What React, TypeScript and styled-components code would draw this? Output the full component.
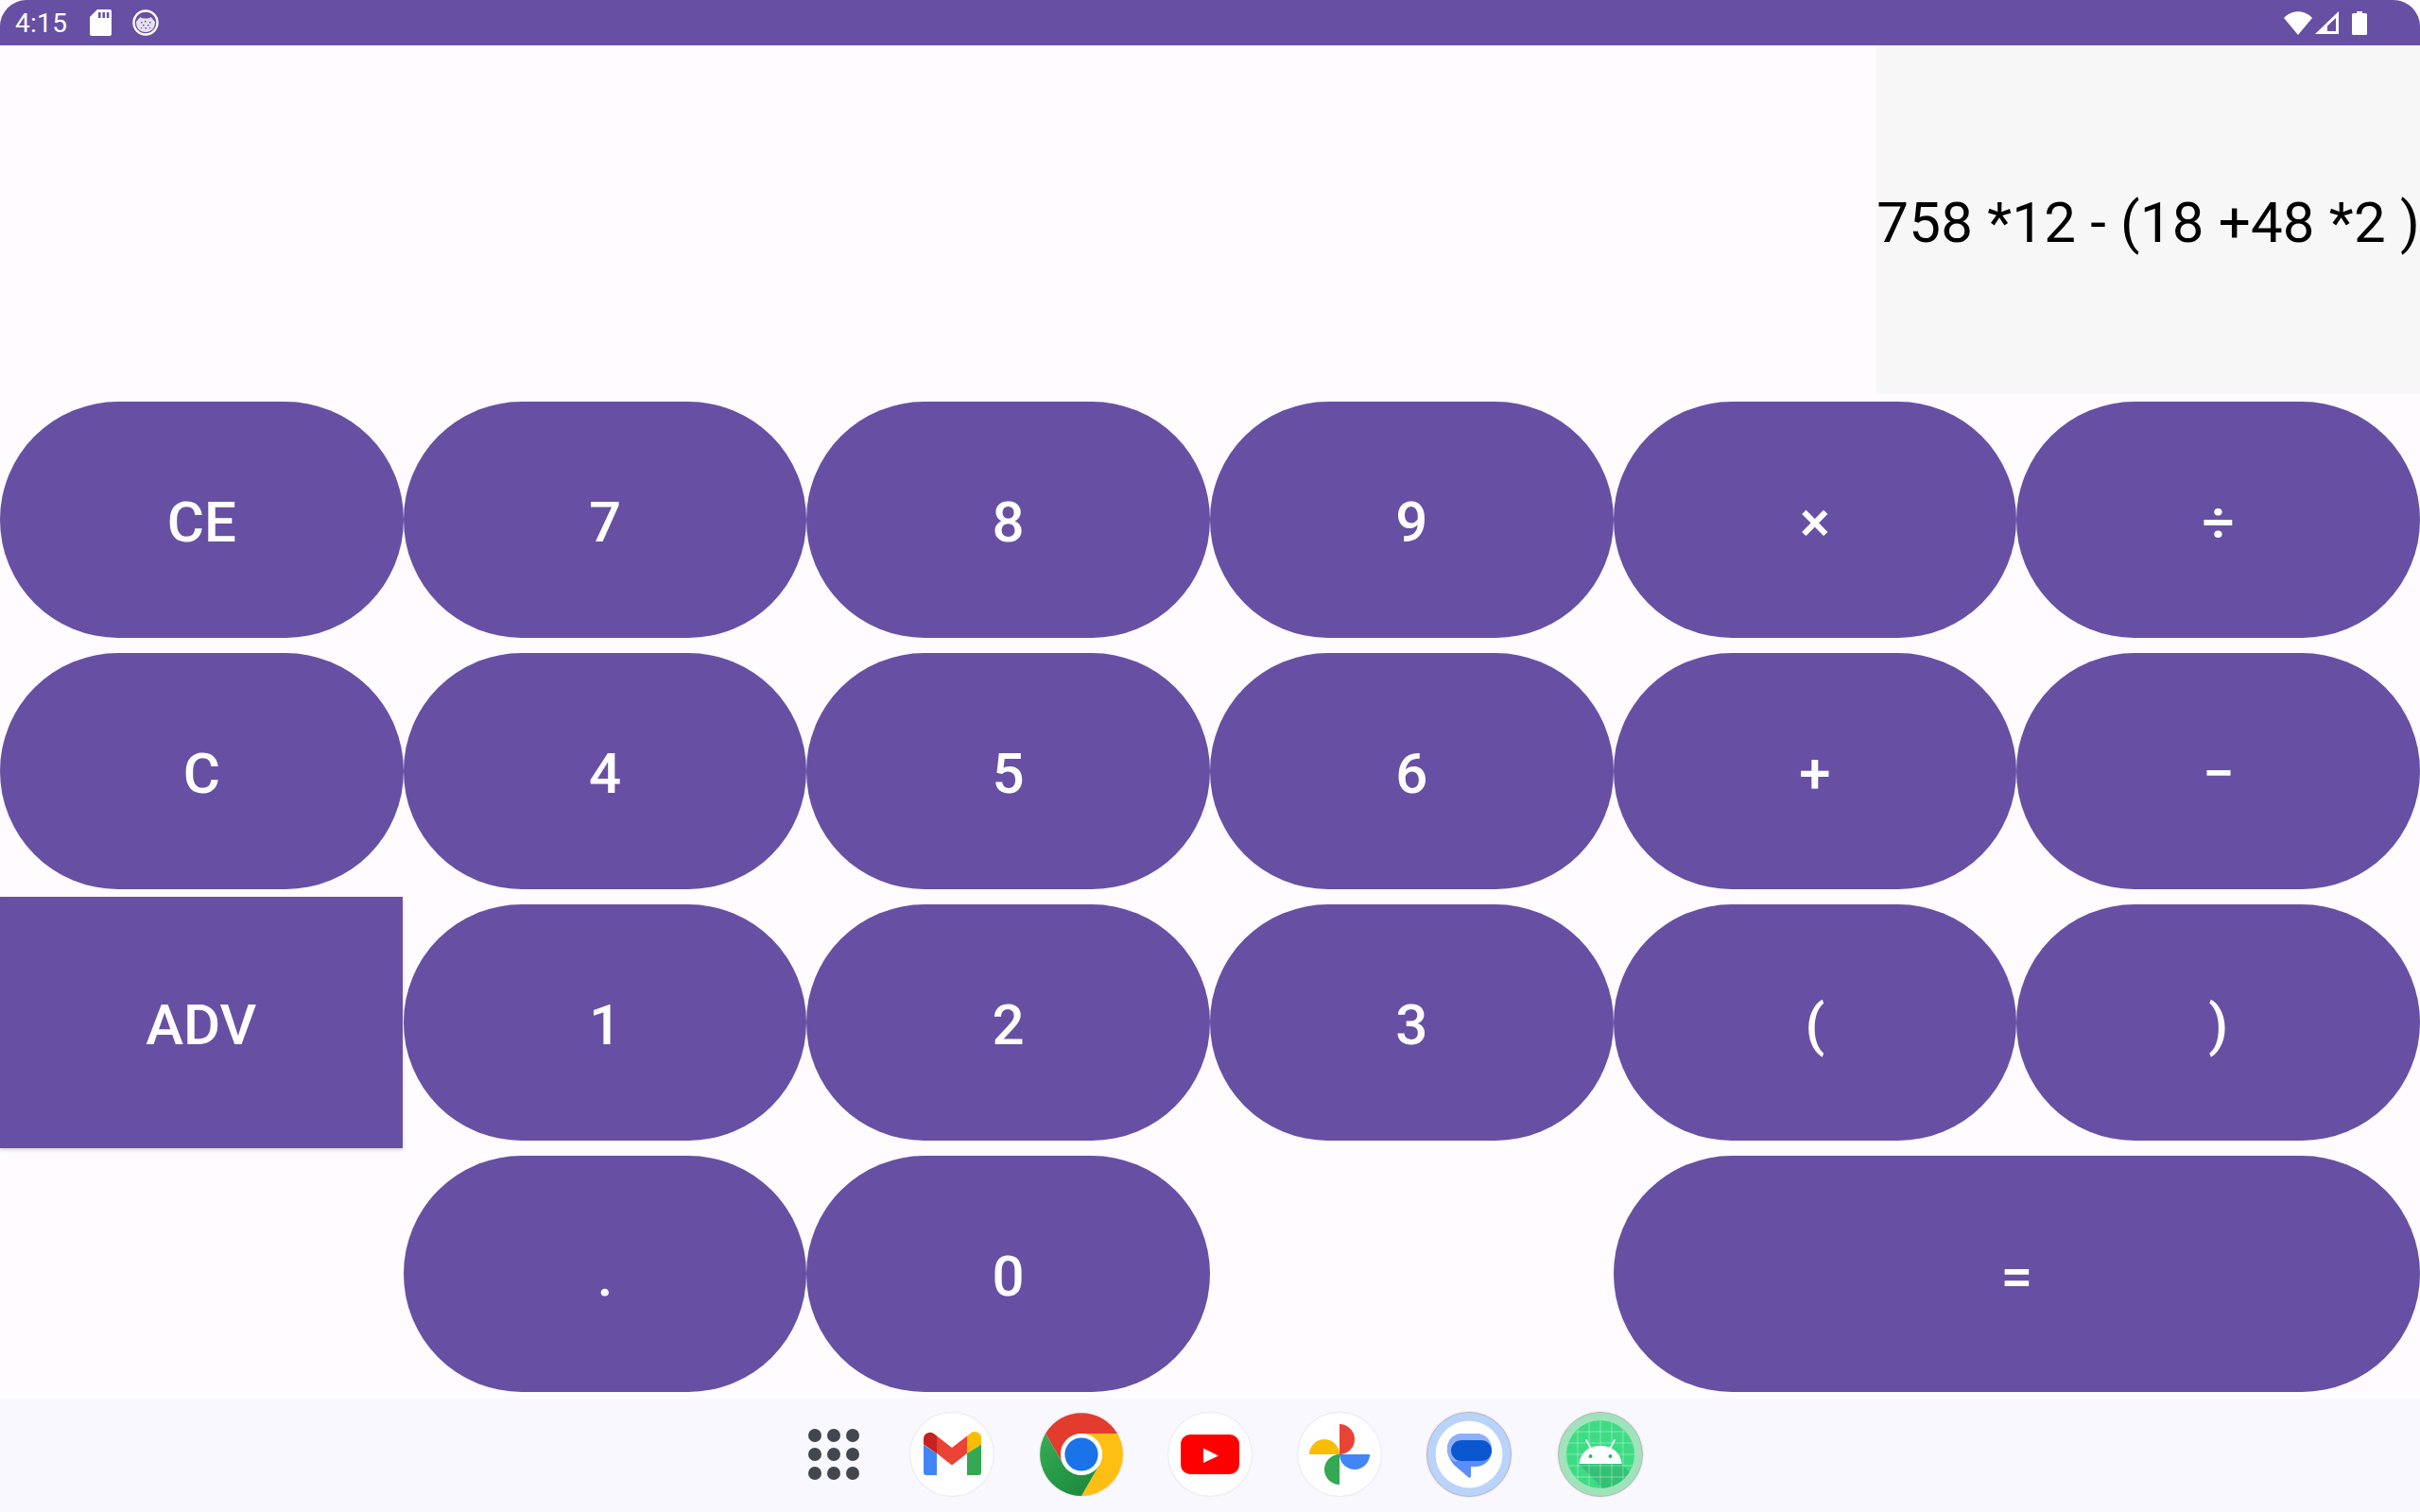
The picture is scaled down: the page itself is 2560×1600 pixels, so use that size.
import React from "react"
import styled, { createGlobalStyle } from "styled-components"

const Global = createGlobalStyle`
html, body {
    margin: 0;
    padding: 0;
    background: #ffffff;
}
* { box-sizing: border-box; }
`

const Screen = styled.div`
width: 2560px;
height: 1600px;
display: flex;
flex-direction: column;
background: #fffbfe;
font-family: Roboto, "Liberation Sans", sans-serif;
overflow: hidden;
`

const StatusBar = styled.div`
height: 48px;
flex: none;
display: flex;
align-items: center;
padding: 0 56px 0 16px;
background: #6750a3;
border-radius: 28px 28px 0 0;
color: #ffffff;
`

const Clock = styled.span`
font-size: 28px;
letter-spacing: 0.3px;
width: 79px;
`

const StatusLeft = styled.div`
display: flex;
align-items: center;
gap: 22px;
flex: 1;
`

const StatusRight = styled.div`
display: flex;
align-items: center;
gap: 3px;
`

const Display = styled.div`
height: 369px;
flex: none;
display: flex;
justify-content: flex-end;
`

const DisplayPanel = styled.div`
display: flex;
align-items: center;
background: #f6f7f6;
font-size: 60px;
letter-spacing: 0.2px;
color: #000000;
white-space: nowrap;
padding-top: 6px;
`

const Keypad = styled.div`
flex: none;
height: 1063px;
display: grid;
grid-template-columns: repeat(6, 1fr);
grid-template-rows: repeat(4, 266px);
`

const Key = styled.button<{ $square?: boolean; $start?: number; $span?: number }>`
appearance: none;
border: 0;
padding: 4px 0 0;
margin: ${(props) => (props.$square ? "0 1px 0 0" : "8px 0")};
grid-column: ${(props) => props.$start || "auto"} / span ${(props) => props.$span || 1};
border-radius: ${(props) => (props.$square ? "0" : "125px")};
background: #6750a3;
color: #ffffff;
font-family: inherit;
font-size: 60px;
font-weight: 500;
box-shadow: ${(props) => (props.$square ? "0 2px 4px rgba(0, 0, 0, 0.16)" : "none")};
`

const Dock = styled.div`
flex: 1;
display: flex;
align-items: center;
justify-content: center;
gap: 48.5px;
padding: 0 0 2px 32px;
background: #f9f8fe;
`

const AppDots = styled.div`
display: grid;
grid-template-columns: repeat(3, 14px);
grid-auto-rows: 14px;
gap: 6px;
margin-right: 6px;
`

const Dot = styled.span`
border-radius: 50%;
background: #44464f;
`

const AppIcon = styled.div<{ $size?: number }>`
width: ${(props) => props.$size || 88}px;
height: ${(props) => props.$size || 88}px;
border-radius: 50%;
background: #ffffff;
box-shadow: 0 0 2px rgba(0, 0, 0, 0.18);
flex: none;
`

const AppSvg = styled.svg`
display: block;
width: 100%;
height: 100%;
`

const Gmail = () => (
    <AppIcon>
        <AppSvg viewBox="0 0 88 88">
            <path d="M14 34V63a3 3 0 0 0 3 3H28V43z" fill="#4285f4" />
            <path d="M14 28a7 7 0 0 1 11.5-5.5L28 24.5V43L14 33.5z" fill="#c5221f" />
            <path d="M28 24.5L44 37L60 24.5V43L44 55.5L28 43z" fill="#ea4335" />
            <path d="M60 24.5l3-2.2A7 7 0 0 1 75 28v5.5L60 43z" fill="#fbbc04" />
            <path d="M60 43L75 33.5V63a3 3 0 0 1-3 3H60z" fill="#34a853" />
        </AppSvg>
    </AppIcon>
)

const Chrome = () => (
    <AppIcon>
        <AppSvg viewBox="0 0 88 88">
            <defs>
                <linearGradient id="chromeGreen" x1="0.1" y1="0.1" x2="0.7" y2="0.9">
                    <stop offset="0" stopColor="#34a853" />
                    <stop offset="1" stopColor="#1e8e3e" />
                </linearGradient>
            </defs>
            <path d="M6 22A44 44 0 0 1 82 22H44A22 22 0 0 0 25 55z" fill="#e33b2e" />
            <path d="M82 22A44 44 0 0 1 44 88L63 55A22 22 0 0 0 44 22z" fill="#fdc012" />
            <path d="M44 88A44 44 0 0 1 6 22L25 55A22 22 0 0 0 63 55z" fill="url(#chromeGreen)" />
            <circle cx="44" cy="44" r="22" fill="#ffffff" />
            <circle cx="44" cy="44" r="17.6" fill="#1a73e8" />
        </AppSvg>
    </AppIcon>
)

const YouTube = () => (
    <AppIcon>
        <AppSvg viewBox="0 0 88 88">
            <rect x="13" y="23" width="62" height="42" rx="10" fill="#ff0000" />
            <path d="M37 37.5L53 45.5L37 53z" fill="#ffffff" />
        </AppSvg>
    </AppIcon>
)

const Photos = () => (
    <AppIcon>
        <AppSvg viewBox="0 0 88 88">
            <path d="M44 12A16 16 0 0 1 44 44z" fill="#ea4335" />
            <path d="M44 44H76A16 16 0 0 1 44 44z" fill="#4285f4" />
            <path d="M44 44V76A16 16 0 0 1 44 44z" fill="#34a853" />
            <path d="M44 44H12A16 16 0 0 1 44 44z" fill="#fbbc04" />
        </AppSvg>
    </AppIcon>
)

const Messages = () => (
    <AppIcon $size={90}>
        <AppSvg viewBox="0 0 90 90">
            <circle cx="45" cy="45" r="44.5" fill="#b9d3fb" stroke="#b5b5b5" strokeWidth="1" />
            <circle cx="45" cy="45" r="35.5" fill="#ffffff" />
            <path d="M38 23H52C62 23 69 31 69 41C69 51 61 58 52 58H47V68Q47 71 44 69L29 56C25 51 22 46 22 39C22 30 29 23 38 23Z" fill="#5b8dfb" />
            <path d="M38 23H52C60 23 66 27 68 34L31 53C25 51 22 46 22 39C22 30 29 23 38 23Z" fill="#8cb0fb" />
            <rect x="26" y="30" width="43" height="22" rx="11" fill="#0b57d0" />
        </AppSvg>
    </AppIcon>
)

const gridLines = [21, 33, 45, 57, 69]

const AndroidApp = () => (
    <AppIcon $size={90}>
        <AppSvg viewBox="0 0 90 90">
            <defs>
                <clipPath id="androidDisc">
                    <circle cx="45" cy="45" r="36" />
                </clipPath>
            </defs>
            <circle cx="45" cy="45" r="44.5" fill="#a0e3ba" stroke="#b5b5b5" strokeWidth="1" />
            <g clipPath="url(#androidDisc)">
                <rect x="8" y="8" width="74" height="74" fill="#3ddc84" />
                <path d="M22 55H67L92 80V92H58z" fill="#33c176" />
                {gridLines.map((v) => (
                    <path key={v} d={`M${v} 0V90M0 ${v}H90`} stroke="#ffffff" strokeOpacity="0.45" strokeWidth="0.8" />
                ))}
            </g>
            <path d="M30 30L35 39M60 30L55 39" stroke="#ffffff" strokeWidth="1.6" strokeLinecap="round" />
            <path d="M22.5 55C23.5 43 33 36 45 36C57 36 66.5 43 67.5 55z" fill="#ffffff" />
            <circle cx="34.5" cy="47" r="2" fill="#33b070" />
            <circle cx="55.5" cy="47" r="2" fill="#33b070" />
        </AppSvg>
    </AppIcon>
)

const SdIcon = () => (
    <svg width="23" height="28" viewBox="0 0 23 28">
        <path d="M8 0H21a2 2 0 0 1 2 2V26a2 2 0 0 1-2 2H2a2 2 0 0 1-2-2V8z" fill="#ffffff" />
        <path d="M9 3h2.6v6H9zM13.4 3H16v6h-2.6zM17.8 3h2.6v6h-2.6z" fill="#6750a3" />
    </svg>
)

const CatchIcon = () => (
    <svg width="28" height="28" viewBox="0 0 28 28">
        <circle cx="14" cy="14" r="12.5" fill="none" stroke="#ffffff" strokeWidth="2.4" />
        <path d="M4 13C6 11 7 9 8.5 8C10 10 18 10 19.5 8C21 9 22 11 24 13C24 20 20 24 14 24C8 24 4 20 4 13Z" fill="#e6e0f2" />
        <path d="M9 13h1.5v1.5H9zM13 12h1.5v1.5H13zM18 13h1.5v1.5H18zM11 16h1.5v1.5H11zM16 16h1.5v1.5H16zM13.5 19h1.5v1.5h-1.5zM9 19h1.2v1.2H9zM18 19h1.2v1.2H18z" fill="#6750a3" />
    </svg>
)

const WifiIcon = () => (
    <svg width="30" height="25" viewBox="0 0 30 25">
        <path d="M0 7C8-2 22-2 30 7L15 25z" fill="#ffffff" />
    </svg>
)

const SignalIcon = () => (
    <svg width="25" height="24" viewBox="0 0 25 24">
        <path fillRule="evenodd" d="M25 0V24H0zM22 7L13 15.5V21H22z" fill="#ffffff" />
    </svg>
)

const BatteryGlyph = styled.svg`
margin-left: 11px;
`

const BatteryIcon = () => (
    <BatteryGlyph width="16" height="25" viewBox="0 0 16 25">
        <path d="M5 0H11V2H14.5A1.5 1.5 0 0 1 16 3.5V23.5A1.5 1.5 0 0 1 14.5 25H1.5A1.5 1.5 0 0 1 0 23.5V3.5A1.5 1.5 0 0 1 1.5 2H5z" fill="#ffffff" />
    </BatteryGlyph>
)

const keys: { label: string; start?: number; span?: number; square?: boolean }[] = [
    { label: "CE" }, { label: "7" }, { label: "8" }, { label: "9" }, { label: "×" }, { label: "÷" },
    { label: "C" }, { label: "4" }, { label: "5" }, { label: "6" }, { label: "+" }, { label: "−" },
    { label: "ADV", square: true }, { label: "1" }, { label: "2" }, { label: "3" }, { label: "(" }, { label: ")" },
    { label: ".", start: 2 }, { label: "0" }, { label: "=", start: 5, span: 2 },
]

function App() {
    return (
        <Screen>
            <Global />
            <StatusBar>
                <Clock>4:15</Clock>
                <StatusLeft>
                    <SdIcon />
                    <CatchIcon />
                </StatusLeft>
                <StatusRight>
                    <WifiIcon />
                    <SignalIcon />
                    <BatteryIcon />
                </StatusRight>
            </StatusBar>
            <Display>
                <DisplayPanel>758 *12 - (18 +48 *2 )</DisplayPanel>
            </Display>
            <Keypad>
                {keys.map((k) => (
                    <Key key={k.label} $square={k.square} $start={k.start} $span={k.span}>{k.label}</Key>
                ))}
            </Keypad>
            <Dock>
                <AppDots>
                    {Array.from({ length: 9 }).map((_, i) => <Dot key={i} />)}
                </AppDots>
                <Gmail />
                <Chrome />
                <YouTube />
                <Photos />
                <Messages />
                <AndroidApp />
            </Dock>
        </Screen>
    )
}

export default App
